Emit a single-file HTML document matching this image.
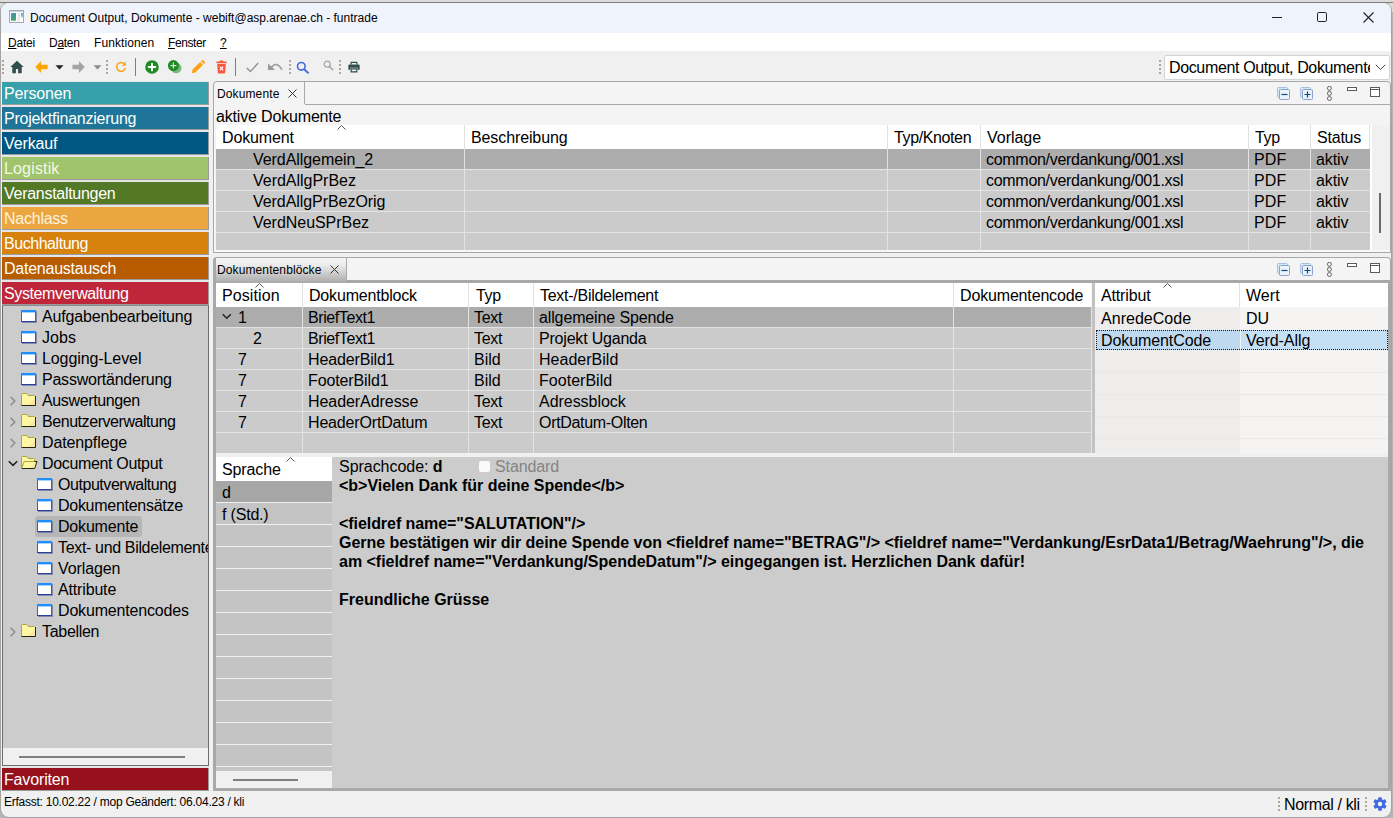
<!DOCTYPE html>
<html lang="de">
<head>
<meta charset="utf-8">
<title>Document Output, Dokumente - webift@asp.arenae.ch - funtrade</title>
<style>
*{box-sizing:border-box;margin:0;padding:0}
html,body{width:1393px;height:818px;overflow:hidden;background:#b4b4b4;font-family:"Liberation Sans",sans-serif;font-size:16px;color:#000}
body div,body span,body svg{position:absolute;white-space:nowrap}
#bgtop{left:0;top:0;width:1393px;height:12px;background:#dddbd9}
#win{left:1px;top:3px;width:1390px;height:814px;background:#f0f0f0;border-radius:8px;box-shadow:0 0 0 1px #a4a4a4}
#title{left:1px;top:3px;width:1390px;height:30px;background:#eff3fb;border-radius:8px 8px 0 0}
.ui{font-size:12px;margin-top:1px}
#menu{left:1px;top:33px;width:1390px;height:18px;background:#fff}
u{text-decoration-thickness:1px;text-underline-offset:1px}
.cat{left:2px;width:207px;height:23px;font-size:16px;line-height:24px;letter-spacing:-0.3px;padding-left:2px;color:#fff;border-right:1px solid #9b9b9b;border-bottom:1px solid #9b9b9b}
#catbg{left:2px;top:81px;width:207px;height:710px;background:#e6e6e6}
#tree{left:2px;top:305px;width:207px;height:461px;background:#ccc;border:1px solid #6e6e6e;border-top-color:#8a8a8a}
#hscroll{left:3px;top:748px;width:205px;height:17px;background:#f0f0f0}
.tr{font-size:16px;line-height:21px;height:21px;letter-spacing:-0.25px}
.grip{width:2px;height:14px;background:repeating-linear-gradient(to bottom,#aea796 0 2px,transparent 2px 4px)}
.vsep{width:1px;height:18px;background:#7f7f7f}
#combo{left:1164px;top:55px;width:226px;height:25px;background:#fff;border:1px solid #d4d4d4;border-radius:2px;overflow:hidden}
.panel{background:#f4f4f4;border:1px solid #a8a8a8;border-radius:4px 4px 0 0}
.tab{height:22px;font-size:12px;line-height:24px;padding-left:2px}
.hd{background:#fff;height:24px}
.c{font-size:16px;line-height:20px;letter-spacing:-0.2px;margin-top:1px}
.row{height:20px;background:#cbcbcb}
.row.sel{background:#adadad}
.lrow{height:21px;background:#c4c4c4}
.lrow.sel{background:#a7a7a7}
.vl{width:1px;background:#fff}
.b{font-weight:bold;font-size:16px;line-height:19px;letter-spacing:-0.05px}
</style>
</head>
<body>
<div id="bgtop"></div>
<div id="win"></div>
<div style="left:0;top:2px;width:1393px;height:1px;background:#7c7c7c"></div>
<div id="title"></div>
<svg style="left:9px;top:10px" width="16" height="13" viewBox="0 0 16 13"><defs><linearGradient id="ig" x1="0" y1="0" x2="1" y2="1"><stop offset="0" stop-color="#5b8fc6"/><stop offset="0.5" stop-color="#3f9a8a"/><stop offset="1" stop-color="#4cae55"/></linearGradient><linearGradient id="ih" x1="0" y1="0" x2="0" y2="1"><stop offset="0" stop-color="#6b9bd0"/><stop offset="1" stop-color="#a6dd9c"/></linearGradient></defs><rect x="0.5" y="0.5" width="14" height="12" fill="#fbfbfb" stroke="#a4aab2"/><rect x="1" y="1" width="13" height="1" fill="#c9ced6"/><rect x="2" y="3" width="5" height="7.7" fill="url(#ig)"/><rect x="9" y="3" width="2" height="7.7" fill="#e3e3e3"/><rect x="12" y="3" width="2" height="4.4" fill="url(#ih)"/></svg>
<svg style="left:1272px;top:17px" width="10" height="1" viewBox="0 0 10 1"><rect width="10" height="1" fill="#222"/></svg>
<svg style="left:1317px;top:12px" width="10" height="10" viewBox="0 0 10 10"><rect x="0.5" y="0.5" width="9" height="9" rx="1.3" fill="none" stroke="#222"/></svg>
<svg style="left:1363px;top:12px" width="11" height="11" viewBox="0 0 11 11"><path d="M0.5 0.5l10 10M10.5 0.5l-10 10" stroke="#222" stroke-width="1.1"/></svg>
<span class="ui" style="left:30px;top:10px;letter-spacing:0.01px">Document Output, Dokumente - webift@asp.arenae.ch - funtrade</span>
<div id="menu"></div>
<span class="ui" style="left:8px;top:35px;letter-spacing:-0.21px"><u>D</u>atei</span>
<span class="ui" style="left:49px;top:35px;letter-spacing:-0.29px">D<u>a</u>ten</span>
<span class="ui" style="left:94px;top:35px;letter-spacing:0.08px">Funktionen</span>
<span class="ui" style="left:168px;top:35px;letter-spacing:-0.40px"><u>F</u>enster</span>
<span class="ui" style="left:220px;top:35px"><u>?</u></span>
<div class="grip" style="left:2px;top:60px"></div>
<svg style="left:10px;top:60px" width="14" height="14" viewBox="0 0 14 14"><path d="M7 0.8L0.3 7h2v6.2h3.6V9h2.2v4.2h3.6V7h2z" fill="#2f4f4f"/></svg>
<svg style="left:35px;top:61px" width="13" height="12" viewBox="0 0 14 12" preserveAspectRatio="none"><path d="M6.5 0L0.3 6l6.2 6V8.3H13.5V3.7H6.5z" fill="#ffa500"/></svg>
<svg style="left:55px;top:65px" width="9" height="5" viewBox="0 0 9 5"><path d="M0.5 0.3h8L4.5 4.6z" fill="#222"/></svg>
<svg style="left:72px;top:61px" width="13" height="12" viewBox="0 0 14 12" preserveAspectRatio="none"><path d="M7.5 0l6.2 6-6.2 6V8.3H0.5V3.7H7.5z" fill="#a3a3a3"/></svg>
<svg style="left:93px;top:65px" width="9" height="5" viewBox="0 0 9 5"><path d="M0.5 0.3h8L4.5 4.6z" fill="#8c8c8c"/></svg>
<div class="grip" style="left:106px;top:60px"></div>
<svg style="left:115px;top:61px" width="12" height="12" viewBox="0 0 14 14"><path d="M11.6 4.2A5.2 5.2 0 1 0 12.2 8" fill="none" stroke="#ffa011" stroke-width="1.7"/><path d="M12.6 0.8v4.6H8z" fill="#ffa011"/></svg>
<div class="vsep" style="left:135px;top:58px"></div>
<svg style="left:145px;top:60px" width="14" height="14" viewBox="0 0 14 14"><circle cx="7" cy="7" r="6.8" fill="#1f8b24"/><path d="M7 3.6v6.8M3.6 7h6.8" stroke="#fff" stroke-width="1.9" stroke-linecap="round"/></svg>
<svg style="left:167px;top:59px" width="16" height="16" viewBox="0 0 16 16"><circle cx="9.2" cy="9" r="5.3" fill="#7ab87c"/><circle cx="6.4" cy="6.6" r="5.5" fill="#1f8b24"/><path d="M6.4 3.6v6M3.4 6.6h6" stroke="#d6ecd6" stroke-width="1.1"/></svg>
<svg style="left:191px;top:60px" width="14" height="14" viewBox="0 0 14 14"><path d="M0.8 13.2l0.8-3.6 7.6-7.6 2.8 2.8-7.6 7.6z M10 1.2l1-1q0.6-0.4 1.2 0l1.6 1.6q0.4 0.6 0 1.2l-1 1z" fill="#ffa011"/></svg>
<svg style="left:216px;top:60px" width="11" height="14" viewBox="0 0 12 14" preserveAspectRatio="none"><path d="M0.5 1.6h3.2l0.8-1h3l0.8 1h3.2v1.6h-11z M1.3 4h9.4l-0.7 8.6q-0.1 1-1.1 1H3.1q-1 0-1.1-1z" fill="#f8583a"/><path d="M4.2 6.6l3.6 3.8M7.8 6.6l-3.6 3.8" stroke="#fff" stroke-width="1.3"/></svg>
<div class="vsep" style="left:235px;top:58px"></div>
<svg style="left:246px;top:62px" width="13" height="11" viewBox="0 0 13 11"><path d="M0.8 6l3.6 3.6L12.2 1" fill="none" stroke="#929292" stroke-width="1.4"/></svg>
<svg style="left:267px;top:62px" width="16" height="10" viewBox="0 0 16 10"><path d="M3.6 6.6Q9 -2.2 15 7.6" fill="none" stroke="#9a9a9a" stroke-width="1.6"/><path d="M1 1.5v6.5h7z" fill="#9a9a9a"/></svg>
<div class="grip" style="left:289px;top:60px"></div>
<svg style="left:296px;top:61px" width="14" height="14" viewBox="0 0 14 14"><circle cx="5.3" cy="5.3" r="3.8" fill="none" stroke="#3f69e0" stroke-width="1.6"/><path d="M8 8l4.6 4.4" stroke="#3f69e0" stroke-width="1.9"/></svg>
<svg style="left:323px;top:60px" width="11" height="11" viewBox="0 0 11 11"><circle cx="4.2" cy="4.2" r="3" fill="none" stroke="#a8a8a8" stroke-width="1.3"/><path d="M6.4 6.4l3.8 3.8" stroke="#a8a8a8" stroke-width="1.6"/></svg>
<div class="grip" style="left:339px;top:60px"></div>
<svg style="left:348px;top:61px" width="12" height="12" viewBox="0 0 14 14"><path d="M3 0.8h8v3.4H3z M4.4 2.2v2h5.2v-2z" fill="#2f4f4f" fill-rule="evenodd"/><path d="M1.6 4.2h10.8q1.2 0 1.2 1.2v4.8h-2.4V8H2.8v2.2H0.4V5.4q0-1.2 1.2-1.2z" fill="#2f4f4f"/><path d="M3 8.6h8v4.8H3z M4.4 10v2h5.2v-2z" fill="#2f4f4f" fill-rule="evenodd"/></svg>
<div class="grip" style="left:1159px;top:60px"></div>
<div id="combo"><span class="c" style="left:4px;top:1px;letter-spacing:-0.36px">Document Output, Dokumente</span><div style="left:205px;top:0;width:20px;height:23px;background:#fff"></div>
<svg style="left:210px;top:8px" width="11" height="7" viewBox="0 0 11 7"><path d="M0.8 0.8l4.7 4.7 4.7-4.7" fill="none" stroke="#444" stroke-width="1"/></svg></div>
<div id="catbg"></div>
<div class="cat" style="top:82px;background:#38a0aa;color:#fff;letter-spacing:-0.14px">Personen</div>
<div class="cat" style="top:107px;background:#1e7599;color:#fff;letter-spacing:-0.25px">Projektfinanzierung</div>
<div class="cat" style="top:132px;background:#005882;color:#fff;letter-spacing:-0.13px">Verkauf</div>
<div class="cat" style="top:157px;background:#a0c46b;color:#f3f8e6;letter-spacing:0.16px">Logistik</div>
<div class="cat" style="top:182px;background:#537826;color:#fff;letter-spacing:-0.28px">Veranstaltungen</div>
<div class="cat" style="top:207px;background:#eba640;color:#fdf3df;letter-spacing:-0.24px">Nachlass</div>
<div class="cat" style="top:232px;background:#d8820e;color:#fff;letter-spacing:-0.45px">Buchhaltung</div>
<div class="cat" style="top:257px;background:#b85c00;color:#fff;letter-spacing:-0.24px">Datenaustausch</div>
<div class="cat" style="top:282px;background:#be263a;color:#fff;letter-spacing:-0.38px">Systemverwaltung</div>
<div id="tree"></div>
<div id="hscroll"></div>
<div style="left:19px;top:756px;width:166px;height:2px;background:#7f7f7f"></div>
<div class="cat" style="top:768px;background:#96111c;letter-spacing:-0.15px">Favoriten</div>
<svg style="left:21px;top:310px" width="16" height="13" viewBox="0 0 16 13"><rect x="0.5" y="0.5" width="14" height="11" fill="#fff" stroke="#2f62c8"/><rect x="0" y="0" width="15" height="2.4" fill="#1e8fff"/><path d="M1.5 12.5h14v-11" fill="none" stroke="#3c4a86" stroke-width="1" stroke-dasharray="1 1"/><path d="M0 11.5h15" stroke="#2a3fa0"/></svg>
<span class="tr" style="left:42px;top:306px;letter-spacing:-0.15px">Aufgabenbearbeitung</span>
<svg style="left:21px;top:331px" width="16" height="13" viewBox="0 0 16 13"><rect x="0.5" y="0.5" width="14" height="11" fill="#fff" stroke="#2f62c8"/><rect x="0" y="0" width="15" height="2.4" fill="#1e8fff"/><path d="M1.5 12.5h14v-11" fill="none" stroke="#3c4a86" stroke-width="1" stroke-dasharray="1 1"/><path d="M0 11.5h15" stroke="#2a3fa0"/></svg>
<span class="tr" style="left:42px;top:327px;letter-spacing:0.10px">Jobs</span>
<svg style="left:21px;top:352px" width="16" height="13" viewBox="0 0 16 13"><rect x="0.5" y="0.5" width="14" height="11" fill="#fff" stroke="#2f62c8"/><rect x="0" y="0" width="15" height="2.4" fill="#1e8fff"/><path d="M1.5 12.5h14v-11" fill="none" stroke="#3c4a86" stroke-width="1" stroke-dasharray="1 1"/><path d="M0 11.5h15" stroke="#2a3fa0"/></svg>
<span class="tr" style="left:42px;top:348px;letter-spacing:-0.09px">Logging-Level</span>
<svg style="left:21px;top:373px" width="16" height="13" viewBox="0 0 16 13"><rect x="0.5" y="0.5" width="14" height="11" fill="#fff" stroke="#2f62c8"/><rect x="0" y="0" width="15" height="2.4" fill="#1e8fff"/><path d="M1.5 12.5h14v-11" fill="none" stroke="#3c4a86" stroke-width="1" stroke-dasharray="1 1"/><path d="M0 11.5h15" stroke="#2a3fa0"/></svg>
<span class="tr" style="left:42px;top:369px;letter-spacing:-0.23px">Passwortänderung</span>
<svg style="left:8px;top:396px" width="9" height="10" viewBox="0 0 9 10"><path d="M2.6 0.8l4.2 4.2-4.2 4.2" fill="none" stroke="#8a8a8a" stroke-width="1.4"/></svg><svg style="left:21px;top:393px" width="16" height="14" viewBox="0 0 16 14"><path d="M0.5 12.5V1.5q0-1 1-1h4q0.8 0 1.2 1l0.5 1h6.3q1 0 1 1v9z" fill="#fdf6a2"/><path d="M7 12.5l7.5-7.5v7.5z" fill="#f7d9a6" opacity=".55"/><path d="M0.5 12.5V1.5q0-1 1-1h4q0.8 0 1.2 1l0.5 1h6.3" stroke="#aaa43a" fill="none"/><path d="M14.5 3v9.5h-14" stroke="#25250f" fill="none"/></svg>
<span class="tr" style="left:42px;top:390px;letter-spacing:-0.37px">Auswertungen</span>
<svg style="left:8px;top:417px" width="9" height="10" viewBox="0 0 9 10"><path d="M2.6 0.8l4.2 4.2-4.2 4.2" fill="none" stroke="#8a8a8a" stroke-width="1.4"/></svg><svg style="left:21px;top:414px" width="16" height="14" viewBox="0 0 16 14"><path d="M0.5 12.5V1.5q0-1 1-1h4q0.8 0 1.2 1l0.5 1h6.3q1 0 1 1v9z" fill="#fdf6a2"/><path d="M7 12.5l7.5-7.5v7.5z" fill="#f7d9a6" opacity=".55"/><path d="M0.5 12.5V1.5q0-1 1-1h4q0.8 0 1.2 1l0.5 1h6.3" stroke="#aaa43a" fill="none"/><path d="M14.5 3v9.5h-14" stroke="#25250f" fill="none"/></svg>
<span class="tr" style="left:42px;top:411px;letter-spacing:-0.44px">Benutzerverwaltung</span>
<svg style="left:8px;top:438px" width="9" height="10" viewBox="0 0 9 10"><path d="M2.6 0.8l4.2 4.2-4.2 4.2" fill="none" stroke="#8a8a8a" stroke-width="1.4"/></svg><svg style="left:21px;top:435px" width="16" height="14" viewBox="0 0 16 14"><path d="M0.5 12.5V1.5q0-1 1-1h4q0.8 0 1.2 1l0.5 1h6.3q1 0 1 1v9z" fill="#fdf6a2"/><path d="M7 12.5l7.5-7.5v7.5z" fill="#f7d9a6" opacity=".55"/><path d="M0.5 12.5V1.5q0-1 1-1h4q0.8 0 1.2 1l0.5 1h6.3" stroke="#aaa43a" fill="none"/><path d="M14.5 3v9.5h-14" stroke="#25250f" fill="none"/></svg>
<span class="tr" style="left:42px;top:432px;letter-spacing:-0.12px">Datenpflege</span>
<svg style="left:8px;top:459px" width="10" height="9" viewBox="0 0 10 9"><path d="M0.8 2.2l4.2 4.2 4.2-4.2" fill="none" stroke="#222" stroke-width="1.6"/></svg><svg style="left:21px;top:456px" width="17" height="14" viewBox="0 0 17 14"><path d="M0.5 12V1.5q0-1 1-1h4q0.8 0 1.2 1l0.5 1h5.3q1 0 1 1v2" fill="#fdf6a2" stroke="#aaa43a"/><path d="M0.7 12.5l2.3-7h13l-2.3 7z" fill="#fdf6a2"/><path d="M8 12.5l6-5.5-1.2 5.5z" fill="#f7d9a6" opacity=".6"/><path d="M3 5.5h10.5" stroke="#aaa43a" fill="none"/><path d="M13.5 5.5h2.5l-2.3 7h-13" stroke="#25250f" fill="none"/><path d="M0.7 12.5l2.3-7" stroke="#aaa43a" fill="none"/></svg>
<span class="tr" style="left:42px;top:453px;letter-spacing:-0.34px">Document Output</span>
<svg style="left:37px;top:478px" width="16" height="13" viewBox="0 0 16 13"><rect x="0.5" y="0.5" width="14" height="11" fill="#fff" stroke="#2f62c8"/><rect x="0" y="0" width="15" height="2.4" fill="#1e8fff"/><path d="M1.5 12.5h14v-11" fill="none" stroke="#3c4a86" stroke-width="1" stroke-dasharray="1 1"/><path d="M0 11.5h15" stroke="#2a3fa0"/></svg>
<span class="tr" style="left:58px;top:474px;letter-spacing:-0.45px">Outputverwaltung</span>
<svg style="left:37px;top:499px" width="16" height="13" viewBox="0 0 16 13"><rect x="0.5" y="0.5" width="14" height="11" fill="#fff" stroke="#2f62c8"/><rect x="0" y="0" width="15" height="2.4" fill="#1e8fff"/><path d="M1.5 12.5h14v-11" fill="none" stroke="#3c4a86" stroke-width="1" stroke-dasharray="1 1"/><path d="M0 11.5h15" stroke="#2a3fa0"/></svg>
<span class="tr" style="left:58px;top:495px;letter-spacing:-0.28px">Dokumentensätze</span>
<div style="left:35px;top:516px;width:107px;height:21px;background:#b6b6b6;border-radius:3px"></div>
<svg style="left:37px;top:520px" width="16" height="13" viewBox="0 0 16 13"><rect x="0.5" y="0.5" width="14" height="11" fill="#fff" stroke="#2f62c8"/><rect x="0" y="0" width="15" height="2.4" fill="#1e8fff"/><path d="M1.5 12.5h14v-11" fill="none" stroke="#3c4a86" stroke-width="1" stroke-dasharray="1 1"/><path d="M0 11.5h15" stroke="#2a3fa0"/></svg>
<span class="tr" style="left:58px;top:516px;letter-spacing:-0.19px">Dokumente</span>
<svg style="left:37px;top:541px" width="16" height="13" viewBox="0 0 16 13"><rect x="0.5" y="0.5" width="14" height="11" fill="#fff" stroke="#2f62c8"/><rect x="0" y="0" width="15" height="2.4" fill="#1e8fff"/><path d="M1.5 12.5h14v-11" fill="none" stroke="#3c4a86" stroke-width="1" stroke-dasharray="1 1"/><path d="M0 11.5h15" stroke="#2a3fa0"/></svg>
<span class="tr" style="left:58px;top:537px;width:150px;overflow:hidden;letter-spacing:-0.34px">Text- und Bildelemente</span>
<svg style="left:37px;top:562px" width="16" height="13" viewBox="0 0 16 13"><rect x="0.5" y="0.5" width="14" height="11" fill="#fff" stroke="#2f62c8"/><rect x="0" y="0" width="15" height="2.4" fill="#1e8fff"/><path d="M1.5 12.5h14v-11" fill="none" stroke="#3c4a86" stroke-width="1" stroke-dasharray="1 1"/><path d="M0 11.5h15" stroke="#2a3fa0"/></svg>
<span class="tr" style="left:58px;top:558px;letter-spacing:-0.11px">Vorlagen</span>
<svg style="left:37px;top:583px" width="16" height="13" viewBox="0 0 16 13"><rect x="0.5" y="0.5" width="14" height="11" fill="#fff" stroke="#2f62c8"/><rect x="0" y="0" width="15" height="2.4" fill="#1e8fff"/><path d="M1.5 12.5h14v-11" fill="none" stroke="#3c4a86" stroke-width="1" stroke-dasharray="1 1"/><path d="M0 11.5h15" stroke="#2a3fa0"/></svg>
<span class="tr" style="left:58px;top:579px;letter-spacing:-0.16px">Attribute</span>
<svg style="left:37px;top:604px" width="16" height="13" viewBox="0 0 16 13"><rect x="0.5" y="0.5" width="14" height="11" fill="#fff" stroke="#2f62c8"/><rect x="0" y="0" width="15" height="2.4" fill="#1e8fff"/><path d="M1.5 12.5h14v-11" fill="none" stroke="#3c4a86" stroke-width="1" stroke-dasharray="1 1"/><path d="M0 11.5h15" stroke="#2a3fa0"/></svg>
<span class="tr" style="left:58px;top:600px;letter-spacing:-0.17px">Dokumentencodes</span>
<svg style="left:8px;top:627px" width="9" height="10" viewBox="0 0 9 10"><path d="M2.6 0.8l4.2 4.2-4.2 4.2" fill="none" stroke="#8a8a8a" stroke-width="1.4"/></svg><svg style="left:21px;top:624px" width="16" height="14" viewBox="0 0 16 14"><path d="M0.5 12.5V1.5q0-1 1-1h4q0.8 0 1.2 1l0.5 1h6.3q1 0 1 1v9z" fill="#fdf6a2"/><path d="M7 12.5l7.5-7.5v7.5z" fill="#f7d9a6" opacity=".55"/><path d="M0.5 12.5V1.5q0-1 1-1h4q0.8 0 1.2 1l0.5 1h6.3" stroke="#aaa43a" fill="none"/><path d="M14.5 3v9.5h-14" stroke="#25250f" fill="none"/></svg>
<span class="tr" style="left:42px;top:621px;letter-spacing:-0.30px">Tabellen</span>
<div class="panel" style="left:213px;top:81px;width:1178px;height:172px"></div>
<div style="left:305px;top:104px;width:1085px;height:1px;background:#a8a8a8"></div>
<div class="tab" style="left:215px;top:82px;width:90px;border-right:1px solid #a8a8a8;border-radius:4px 0 0 0;letter-spacing:0.12px">Dokumente</div>
<svg style="left:288px;top:89px" width="9" height="9" viewBox="0 0 9 9"><path d="M0.5 0.5l8 8M8.5 0.5l-8 8" stroke="#333" stroke-width="1"/></svg>
<svg style="left:1277px;top:87px" width="14" height="14" viewBox="0 0 14 14"><rect x="0.5" y="0.5" width="10" height="10" rx="1" fill="#d6e6f5" stroke="#a8c0dc"/><rect x="2.5" y="2.5" width="10" height="10" rx="1" fill="#eaf2fb" stroke="#8aa3c8"/><path d="M4.5 7.5h6" stroke="#104a86" stroke-width="1.2"/></svg>
<svg style="left:1300px;top:87px" width="14" height="14" viewBox="0 0 14 14"><rect x="0.5" y="0.5" width="10" height="10" rx="1" fill="#d6e6f5" stroke="#a8c0dc"/><rect x="2.5" y="2.5" width="10" height="10" rx="1" fill="#eaf2fb" stroke="#8aa3c8"/><path d="M4.5 7.5h6M7.5 4.5v6" stroke="#104a86" stroke-width="1.2"/></svg>
<svg style="left:1326px;top:86px" width="7" height="15" viewBox="0 0 7 15"><g fill="none" stroke="#555" stroke-width="0.9"><circle cx="3.4" cy="2.3" r="2"/><circle cx="3.4" cy="7.4" r="2"/><circle cx="3.4" cy="12.5" r="2"/></g></svg>
<svg style="left:1347px;top:87px" width="11" height="4" viewBox="0 0 11 4"><rect x="0.5" y="0.5" width="9" height="3" fill="#fff" stroke="#5a5a5a"/></svg>
<svg style="left:1370px;top:87px" width="11" height="11" viewBox="0 0 11 11"><rect x="0.5" y="0.5" width="9" height="9" fill="#fff" stroke="#5a5a5a"/><path d="M0.5 2.5h9" stroke="#5a5a5a"/></svg>
<span class="c" style="left:216px;top:106px;letter-spacing:-0.17px">aktive Dokumente</span>
<div style="left:216px;top:125px;width:1154px;height:24px;background:#fff"></div>
<div style="left:216px;top:149px;width:1154px;height:101px;background:#e3e3e3"></div>
<div style="left:1370px;top:125px;width:2px;height:125px;background:#fff"></div>
<div class="row sel" style="left:216px;top:149px;width:1154px;height:20px"></div>
<div class="row" style="left:216px;top:170px;width:1154px;height:20px"></div>
<div class="row" style="left:216px;top:191px;width:1154px;height:20px"></div>
<div class="row" style="left:216px;top:212px;width:1154px;height:20px"></div>
<div class="row" style="left:216px;top:233px;width:1154px;height:17px"></div>
<div style="left:464px;top:125px;width:1px;height:24px;background:#e2e2e2"></div>
<div style="left:464px;top:149px;width:1px;height:101px;background:#e3e3e3"></div>
<div style="left:887px;top:125px;width:1px;height:24px;background:#e2e2e2"></div>
<div style="left:887px;top:149px;width:1px;height:101px;background:#e3e3e3"></div>
<div style="left:980px;top:125px;width:1px;height:24px;background:#e2e2e2"></div>
<div style="left:980px;top:149px;width:1px;height:101px;background:#e3e3e3"></div>
<div style="left:1248px;top:125px;width:1px;height:24px;background:#e2e2e2"></div>
<div style="left:1248px;top:149px;width:1px;height:101px;background:#e3e3e3"></div>
<div style="left:1310px;top:125px;width:1px;height:24px;background:#e2e2e2"></div>
<div style="left:1310px;top:149px;width:1px;height:101px;background:#e3e3e3"></div>
<div style="left:1369px;top:125px;width:1px;height:24px;background:#e2e2e2"></div>
<div style="left:1372px;top:125px;width:18px;height:125px;background:#f0f0f0"></div>
<div style="left:1379px;top:193px;width:2px;height:40px;background:#6a6a6a"></div>
<div style="left:215px;top:250px;width:1175px;height:2px;background:#f8f8f8"></div>
<span class="c" style="left:222px;top:127px;letter-spacing:-0.15px">Dokument</span>
<span class="c" style="left:471px;top:127px;letter-spacing:-0.11px">Beschreibung</span>
<span class="c" style="left:894px;top:127px;letter-spacing:-0.38px">Typ/Knoten</span>
<span class="c" style="left:987px;top:127px;letter-spacing:-0.03px">Vorlage</span>
<span class="c" style="left:1255px;top:127px;letter-spacing:-0.30px">Typ</span>
<span class="c" style="left:1317px;top:127px;letter-spacing:-0.21px">Status</span>
<svg style="left:337px;top:125px" width="9" height="5" viewBox="0 0 9 5"><path d="M0.5 4.5l4-4 4 4" fill="none" stroke="#555" stroke-width="1"/></svg>
<span class="c" style="left:253px;top:149px;letter-spacing:-0.06px">VerdAllgemein_2</span>
<span class="c" style="left:986px;top:149px;letter-spacing:-0.29px">common/verdankung/001.xsl</span>
<span class="c" style="left:1254px;top:149px;letter-spacing:0.10px">PDF</span>
<span class="c" style="left:1316px;top:149px;letter-spacing:-0.08px">aktiv</span>
<span class="c" style="left:253px;top:170px;letter-spacing:-0.02px">VerdAllgPrBez</span>
<span class="c" style="left:986px;top:170px;letter-spacing:-0.29px">common/verdankung/001.xsl</span>
<span class="c" style="left:1254px;top:170px;letter-spacing:0.10px">PDF</span>
<span class="c" style="left:1316px;top:170px;letter-spacing:-0.08px">aktiv</span>
<span class="c" style="left:253px;top:191px;letter-spacing:-0.06px">VerdAllgPrBezOrig</span>
<span class="c" style="left:986px;top:191px;letter-spacing:-0.29px">common/verdankung/001.xsl</span>
<span class="c" style="left:1254px;top:191px;letter-spacing:0.10px">PDF</span>
<span class="c" style="left:1316px;top:191px;letter-spacing:-0.08px">aktiv</span>
<span class="c" style="left:253px;top:212px;letter-spacing:-0.04px">VerdNeuSPrBez</span>
<span class="c" style="left:986px;top:212px;letter-spacing:-0.29px">common/verdankung/001.xsl</span>
<span class="c" style="left:1254px;top:212px;letter-spacing:0.10px">PDF</span>
<span class="c" style="left:1316px;top:212px;letter-spacing:-0.08px">aktiv</span>
<div class="panel" style="left:213px;top:257px;width:1178px;height:534px;border-width:1px 1px 3px 3px"></div>
<div style="left:347px;top:280px;width:1043px;height:3px;background:#a8a8a8"></div>
<div style="left:1388px;top:283px;width:2px;height:505px;background:#a8a8a8"></div>
<div class="tab" style="left:216px;top:258px;width:131px;height:25px;border-right:1px solid #a8a8a8;background:linear-gradient(#f4f4f4,#eee 25%,#a9a9a9);padding-left:1px;letter-spacing:0.11px">Dokumentenblöcke</div>
<svg style="left:330px;top:265px" width="9" height="9" viewBox="0 0 9 9"><path d="M0.5 0.5l8 8M8.5 0.5l-8 8" stroke="#333" stroke-width="1"/></svg>
<svg style="left:1277px;top:263px" width="14" height="14" viewBox="0 0 14 14"><rect x="0.5" y="0.5" width="10" height="10" rx="1" fill="#d6e6f5" stroke="#a8c0dc"/><rect x="2.5" y="2.5" width="10" height="10" rx="1" fill="#eaf2fb" stroke="#8aa3c8"/><path d="M4.5 7.5h6" stroke="#104a86" stroke-width="1.2"/></svg>
<svg style="left:1300px;top:263px" width="14" height="14" viewBox="0 0 14 14"><rect x="0.5" y="0.5" width="10" height="10" rx="1" fill="#d6e6f5" stroke="#a8c0dc"/><rect x="2.5" y="2.5" width="10" height="10" rx="1" fill="#eaf2fb" stroke="#8aa3c8"/><path d="M4.5 7.5h6M7.5 4.5v6" stroke="#104a86" stroke-width="1.2"/></svg>
<svg style="left:1326px;top:262px" width="7" height="15" viewBox="0 0 7 15"><g fill="none" stroke="#555" stroke-width="0.9"><circle cx="3.4" cy="2.3" r="2"/><circle cx="3.4" cy="7.4" r="2"/><circle cx="3.4" cy="12.5" r="2"/></g></svg>
<svg style="left:1347px;top:263px" width="11" height="4" viewBox="0 0 11 4"><rect x="0.5" y="0.5" width="9" height="3" fill="#fff" stroke="#5a5a5a"/></svg>
<svg style="left:1370px;top:263px" width="11" height="11" viewBox="0 0 11 11"><rect x="0.5" y="0.5" width="9" height="9" fill="#fff" stroke="#5a5a5a"/><path d="M0.5 2.5h9" stroke="#5a5a5a"/></svg>
<div style="left:216px;top:283px;width:875px;height:24px;background:#fff"></div>
<div style="left:216px;top:307px;width:876px;height:146px;background:#e3e3e3"></div>
<div class="row sel" style="left:216px;top:307px;width:875px"></div>
<div class="row" style="left:216px;top:328px;width:875px"></div>
<div class="row" style="left:216px;top:349px;width:875px"></div>
<div class="row" style="left:216px;top:370px;width:875px"></div>
<div class="row" style="left:216px;top:391px;width:875px"></div>
<div class="row" style="left:216px;top:412px;width:875px"></div>
<div class="row" style="left:216px;top:433px;width:875px"></div>
<div style="left:302px;top:283px;width:1px;height:24px;background:#e2e2e2"></div>
<div style="left:302px;top:307px;width:1px;height:146px;background:#e3e3e3"></div>
<div style="left:468px;top:283px;width:1px;height:24px;background:#e2e2e2"></div>
<div style="left:468px;top:307px;width:1px;height:146px;background:#e3e3e3"></div>
<div style="left:533px;top:283px;width:1px;height:24px;background:#e2e2e2"></div>
<div style="left:533px;top:307px;width:1px;height:146px;background:#e3e3e3"></div>
<div style="left:953px;top:283px;width:1px;height:24px;background:#e2e2e2"></div>
<div style="left:953px;top:307px;width:1px;height:146px;background:#e3e3e3"></div>
<div style="left:1092px;top:283px;width:3px;height:170px;background:#c2c2c2"></div>
<span class="c" style="left:222px;top:285px;letter-spacing:0.10px">Position</span>
<span class="c" style="left:309px;top:285px;letter-spacing:-0.18px">Dokumentblock</span>
<span class="c" style="left:476px;top:285px;letter-spacing:-0.30px">Typ</span>
<span class="c" style="left:540px;top:285px;letter-spacing:-0.27px">Text-/Bildelement</span>
<span class="c" style="left:960px;top:285px;letter-spacing:-0.16px">Dokumentencode</span>
<svg style="left:255px;top:283px" width="9" height="5" viewBox="0 0 9 5"><path d="M0.5 4.5l4-4 4 4" fill="none" stroke="#555" stroke-width="1"/></svg>
<svg style="left:222px;top:312px" width="10" height="9" viewBox="0 0 10 9"><path d="M0.8 2.2l4 4 4-4" fill="none" stroke="#222" stroke-width="1.5"/></svg>
<span class="c" style="left:238px;top:307px">1</span>
<span class="c" style="left:308px;top:307px;letter-spacing:-0.41px">BriefText1</span>
<span class="c" style="left:474px;top:307px;letter-spacing:-0.30px">Text</span>
<span class="c" style="left:539px;top:307px;letter-spacing:-0.13px">allgemeine Spende</span>
<span class="c" style="left:253px;top:328px">2</span>
<span class="c" style="left:308px;top:328px;letter-spacing:-0.41px">BriefText1</span>
<span class="c" style="left:474px;top:328px;letter-spacing:-0.30px">Text</span>
<span class="c" style="left:539px;top:328px;letter-spacing:-0.20px">Projekt Uganda</span>
<span class="c" style="left:238px;top:349px">7</span>
<span class="c" style="left:308px;top:349px;letter-spacing:-0.14px">HeaderBild1</span>
<span class="c" style="left:474px;top:349px;letter-spacing:0.00px">Bild</span>
<span class="c" style="left:539px;top:349px;letter-spacing:0.02px">HeaderBild</span>
<span class="c" style="left:238px;top:370px">7</span>
<span class="c" style="left:308px;top:370px;letter-spacing:-0.12px">FooterBild1</span>
<span class="c" style="left:474px;top:370px;letter-spacing:0.00px">Bild</span>
<span class="c" style="left:539px;top:370px;letter-spacing:0.03px">FooterBild</span>
<span class="c" style="left:238px;top:391px">7</span>
<span class="c" style="left:308px;top:391px;letter-spacing:-0.06px">HeaderAdresse</span>
<span class="c" style="left:474px;top:391px;letter-spacing:-0.30px">Text</span>
<span class="c" style="left:539px;top:391px;letter-spacing:-0.04px">Adressblock</span>
<span class="c" style="left:238px;top:412px">7</span>
<span class="c" style="left:308px;top:412px;letter-spacing:-0.17px">HeaderOrtDatum</span>
<span class="c" style="left:474px;top:412px;letter-spacing:-0.30px">Text</span>
<span class="c" style="left:539px;top:412px;letter-spacing:-0.32px">OrtDatum-Olten</span>
<div style="left:1095px;top:283px;width:293px;height:24px;background:#fff"></div>
<div style="left:1095px;top:307px;width:145px;height:146px;background:#eeedeb"></div>
<div style="left:1240px;top:307px;width:148px;height:146px;background:#f5f4f2"></div>
<div style="left:1095px;top:372px;width:293px;height:1px;background:#e9e9e7"></div>
<div style="left:1095px;top:394px;width:293px;height:1px;background:#e9e9e7"></div>
<div style="left:1095px;top:416px;width:293px;height:1px;background:#e9e9e7"></div>
<div style="left:1095px;top:438px;width:293px;height:1px;background:#e9e9e7"></div>
<div style="left:1239px;top:283px;width:1px;height:24px;background:#e2e2e2"></div>
<div style="left:1096px;top:330px;width:144px;height:20px;background:#bfdaf0;border:1px dotted #2a1608;border-right:none"></div>
<div style="left:1241px;top:330px;width:147px;height:20px;background:#c5dff5;border:1px dotted #2a1608;border-left:none"></div>
<svg style="left:1163px;top:283px" width="9" height="5" viewBox="0 0 9 5"><path d="M0.5 4.5l4-4 4 4" fill="none" stroke="#555" stroke-width="1"/></svg>
<span class="c" style="left:1101px;top:285px;letter-spacing:-0.15px">Attribut</span>
<span class="c" style="left:1246px;top:285px;letter-spacing:0.04px">Wert</span>
<span class="c" style="left:1101px;top:308px;letter-spacing:0.03px">AnredeCode</span>
<span class="c" style="left:1246px;top:308px;letter-spacing:-0.11px">DU</span>
<span class="c" style="left:1101px;top:330px;letter-spacing:-0.09px">DokumentCode</span>
<span class="c" style="left:1246px;top:330px;letter-spacing:-0.08px">Verd-Allg</span>
<div style="left:216px;top:453px;width:1172px;height:4px;background:#f0f0f0"></div>
<div style="left:332px;top:457px;width:1056px;height:331px;background:#ccc"></div>
<div style="left:216px;top:457px;width:116px;height:24px;background:#fff"></div>
<div style="left:216px;top:481px;width:116px;height:290px;background:#f0f0f0"></div>
<div class="lrow sel" style="left:216px;top:481px;width:116px;height:21px"></div>
<div class="lrow" style="left:216px;top:503px;width:116px;height:21px"></div>
<div class="lrow" style="left:216px;top:525px;width:116px;height:21px"></div>
<div class="lrow" style="left:216px;top:547px;width:116px;height:21px"></div>
<div class="lrow" style="left:216px;top:569px;width:116px;height:21px"></div>
<div class="lrow" style="left:216px;top:591px;width:116px;height:21px"></div>
<div class="lrow" style="left:216px;top:613px;width:116px;height:21px"></div>
<div class="lrow" style="left:216px;top:635px;width:116px;height:21px"></div>
<div class="lrow" style="left:216px;top:657px;width:116px;height:21px"></div>
<div class="lrow" style="left:216px;top:679px;width:116px;height:21px"></div>
<div class="lrow" style="left:216px;top:701px;width:116px;height:21px"></div>
<div class="lrow" style="left:216px;top:723px;width:116px;height:21px"></div>
<div class="lrow" style="left:216px;top:745px;width:116px;height:21px"></div>
<div class="lrow" style="left:216px;top:767px;width:116px;height:4px"></div>
<div style="left:216px;top:771px;width:116px;height:17px;background:#f0f0f0"></div>
<div style="left:233px;top:779px;width:65px;height:2px;background:#7f7f7f"></div>
<span class="c" style="left:222px;top:459px;letter-spacing:-0.12px">Sprache</span>
<svg style="left:286px;top:457px" width="9" height="5" viewBox="0 0 9 5"><path d="M0.5 4.5l4-4 4 4" fill="none" stroke="#555" stroke-width="1"/></svg>
<span class="c" style="left:222px;top:482px">d</span>
<span class="c" style="left:222px;top:504px;letter-spacing:-0.19px">f (Std.)</span>
<span class="c" style="left:339px;top:456px;letter-spacing:-0.04px">Sprachcode: <b>d</b></span>
<div style="left:479px;top:461px;width:11px;height:11px;background:#f9f9f9;border-radius:2px"></div>
<span class="c" style="left:495px;top:456px;color:#848484;letter-spacing:-0.12px">Standard</span>
<span class="b" style="left:339px;top:476px;letter-spacing:-0.02px">&lt;b&gt;Vielen Dank für deine Spende&lt;/b&gt;</span>
<span class="b" style="left:339px;top:514px;letter-spacing:-0.06px">&lt;fieldref name="SALUTATION"/&gt;</span>
<span class="b" style="left:339px;top:533px;letter-spacing:-0.04px">Gerne bestätigen wir dir deine Spende von &lt;fieldref name="BETRAG"/&gt; &lt;fieldref name="Verdankung/EsrData1/Betrag/Waehrung"/&gt;, die</span>
<span class="b" style="left:339px;top:552px;letter-spacing:-0.02px">am &lt;fieldref name="Verdankung/SpendeDatum"/&gt; eingegangen ist. Herzlichen Dank dafür!</span>
<span class="b" style="left:339px;top:590px;letter-spacing:0.00px">Freundliche Grüsse</span>
<span class="ui" style="left:4px;top:794px;letter-spacing:-0.25px">Erfasst: 10.02.22 / mop Geändert: 06.04.23 / kli</span>
<div class="grip" style="left:1278px;top:797px;height:14px"></div>
<span class="c" style="left:1284px;top:794px;letter-spacing:-0.36px">Normal / kli</span>
<div class="grip" style="left:1365px;top:797px;height:14px"></div>
<svg style="left:1373px;top:797px" width="14" height="14" viewBox="0 0 14 14"><g fill="#4169e1"><circle cx="7" cy="7" r="5.1"/><rect x="5.2" y="0.2" width="3.6" height="13.6" rx="0.9"/><rect x="5.2" y="0.2" width="3.6" height="13.6" rx="0.9" transform="rotate(60 7 7)"/><rect x="5.2" y="0.2" width="3.6" height="13.6" rx="0.9" transform="rotate(120 7 7)"/></g><circle cx="7" cy="7" r="2.2" fill="#f0f0f0"/></svg>
</body>
</html>
